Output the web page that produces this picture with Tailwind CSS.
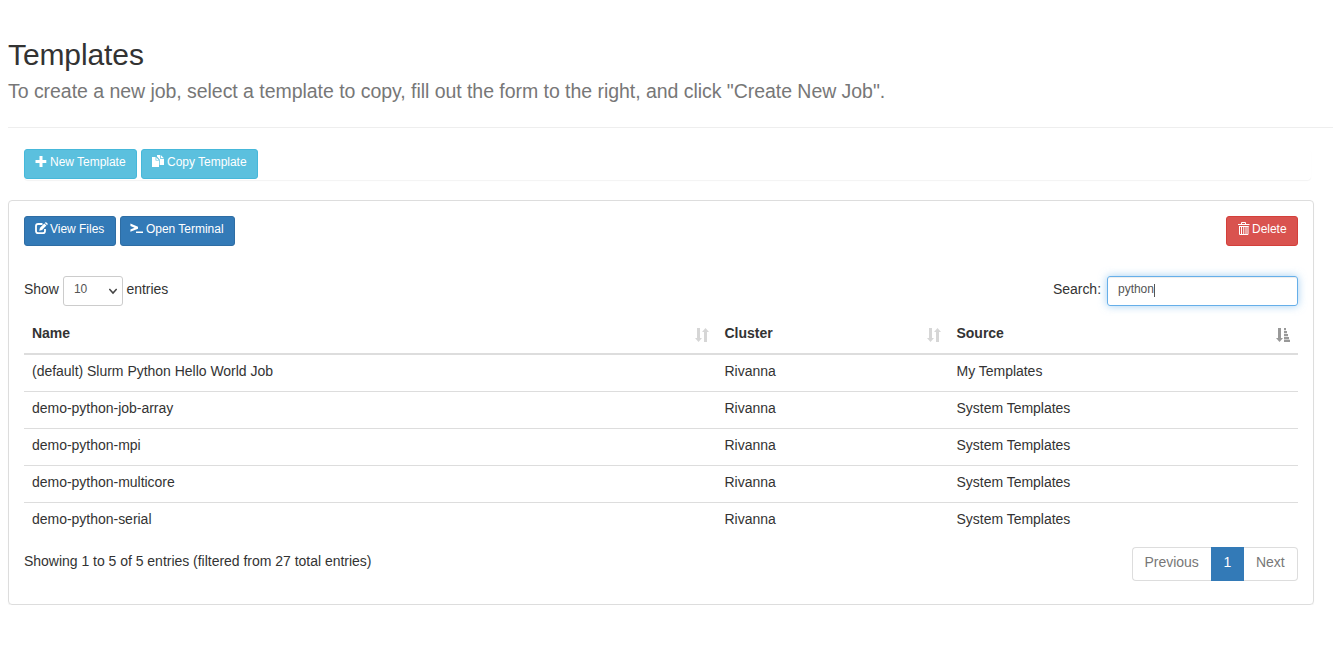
<!DOCTYPE html>
<html lang="en">
<head>
<meta charset="utf-8">
<title>Templates</title>
<script src="https://cdn.jsdelivr.net/npm/@tailwindcss/browser@4"></script>
</head>
<body class="bg-white font-['Nimbus_Sans','Liberation_Sans',Arial,sans-serif] text-sm leading-5 tracking-[-0.02px] text-[#333] overflow-hidden">
<div class="pl-2 pt-[38px]">
  <header class="h-[90px] border-b border-[#eee]">
    <h1 class="text-[30px] leading-[33px] tracking-[-0.1px]">Templates</h1>
    <p class="mt-[8px] text-[19.5px] leading-6 tracking-[-0.042px] text-[#777]">To create a new job, select a template to copy, fill out the form to the right, and click "Create New Job".</p>
  </header>

  <div class="ml-4 mt-[21px] mr-[22px] flex h-[31px] items-start gap-1 rounded-[4px] text-xs text-white shadow-[0_1px_1px_rgba(0,0,0,0.05)]">
    <button class="flex h-[30px] w-[113px] items-start rounded-[3px] border border-[#46b8da] bg-[#5bc0de] pl-2.5 pt-[5px] leading-[15px] whitespace-nowrap">
      <svg class="mr-[3px] mt-px h-3 w-3 shrink-0" viewBox="0 0 12 12" fill="currentColor"><path d="M4.500 0h3v4H11.300v3H7.500v4h-3V7H.5V4h4z"/></svg><span>New Template</span>
    </button>
    <button class="flex h-[30px] w-[117px] items-start rounded-[3px] border border-[#46b8da] bg-[#5bc0de] pl-2.5 pt-[5px] leading-[15px] whitespace-nowrap">
      <svg class="mr-[3px] h-[13px] w-3 shrink-0" viewBox="0 0 12 13" fill="currentColor"><path d="M0 2h3.600v3.600h3.400V12H0zM4.300 2.300 6.700 4.900H4.300zM5 0h3.300v4H12v6H7.700V4.500L5 1.500zM9 .3 12 3.300H9z"/></svg><span>Copy Template</span>
    </button>
  </div>

  <main class="mt-[20px] mr-[19px] h-[405px] rounded-[4px] border border-[#ddd] px-[15px] pt-[15px] shadow-[0_1px_1px_rgba(0,0,0,0.05)]">
    <div class="flex items-start gap-1 text-xs text-white">
      <button class="flex h-[30px] w-[92px] items-start rounded-[3px] border border-[#2e6da4] bg-[#337ab7] pl-2.5 pt-[5px] leading-[15px] whitespace-nowrap">
        <svg class="mr-[2px] h-[13px] w-[13px] shrink-0" viewBox="0 0 13 13" fill="none" stroke="currentColor"><path stroke-width="1.800" d="M7.500 2H3.200C1.800 2 1 2.800 1 4v5c0 1.400.8 2.200 2.200 2.200H8c1.400 0 2-.8 2-2.200V7"/><path fill="currentColor" stroke="none" d="m4.200 8.800.8-3L9.300 1.500l2.100 2.100L7.100 7.900zM9.900 1l1-.9 2.100 2-1 .9z"/></svg><span>View Files</span>
      </button>
      <button class="flex h-[30px] w-[115px] items-start rounded-[3px] border border-[#2e6da4] bg-[#337ab7] pl-[9px] pt-[5px] leading-[15px] whitespace-nowrap">
        <svg class="mr-[3px] h-[13px] w-[13px] shrink-0" viewBox="0 0 13 13" fill="currentColor"><path d="M.4 1.600 8 4.800v1.900L.4 9.800V7.500L4.600 5.700.4 3.900zM6 9.500h7v1.500H6z"/></svg><span>Open Terminal</span>
      </button>
      <button class="ml-auto flex h-[30px] w-[72px] items-start rounded-[3px] border border-[#d43f3a] bg-[#d9534f] pl-[11px] pt-[5px] leading-[15px] whitespace-nowrap">
        <svg class="mr-[2px] h-[13px] w-3 shrink-0" viewBox="0 0 12 13" fill="none" stroke="currentColor"><path d="M3.500 2V.5h4V2M0 2.500h11.500M1.500 4v8.500h8.500V4M3.500 4v8M5.750 4v8M8 4v8M1 4.500h9.500"/></svg><span>Delete</span>
      </button>
    </div>

    <div class="mt-[30px] flex h-[30px] items-start">
      <span class="pt-[3px]">Show</span>
      <div class="ml-1 flex h-[30px] w-[60px] justify-between rounded-[3px] border border-[#ccc] pl-2.5 pr-[5px] pt-1 text-xs leading-[17px] text-[#555]">10
        <svg class="mt-[7px] h-[7px] w-2" viewBox="0 0 8 7" fill="none" stroke="#444" stroke-width="1.600"><path d="m.3 1 3.700 4 3.700-4"/></svg>
      </div>
      <span class="ml-[3.500px] pt-[3px]">entries</span>
      <span class="ml-auto mr-1.5 pt-[3px]">Search:</span>
      <div class="flex h-[30px] w-[191px] rounded-[3px] border border-[#66afe9] pl-2.5 pt-1 text-xs leading-[17px] text-[#555] shadow-[inset_0_1px_1px_rgba(0,0,0,0.075),0_0_8px_rgba(102,175,233,0.6)]">python<span class="mt-[3px] h-[13px] w-px bg-[#555]"></span></div>
    </div>

    <table class="mt-[6px] w-[1274px] table-fixed border-collapse text-left">
      <colgroup><col class="w-[692.500px]"><col class="w-[232px]"><col class="w-[349.500px]"></colgroup>
      <thead>
        <tr class="h-[42px] border-b-2 border-[#ddd] align-top font-bold">
          <th class="pl-2 pr-2 pt-[11px]"><div class="flex justify-between">Name<svg class="mt-[5px] h-[14px] w-[14px] text-[#d6d6d6]" viewBox="0 0 14 14" fill="currentColor"><path d="M2 0h3v10h2l-3.500 4L0 10h2zM9 14h3V4h2l-3.500-4L7 4h2z"/></svg></div></th>
          <th class="pl-2 pr-2 pt-[11px]"><div class="flex justify-between">Cluster<svg class="mt-[5px] h-[14px] w-[14px] text-[#d6d6d6]" viewBox="0 0 14 14" fill="currentColor"><path d="M2 0h3v10h2l-3.500 4L0 10h2zM9 14h3V4h2l-3.500-4L7 4h2z"/></svg></div></th>
          <th class="pl-2 pr-2 pt-[11px]"><div class="flex justify-between">Source<svg class="mt-[5px] h-[14px] w-[14px] text-[#999]" viewBox="0 0 14 14" fill="currentColor"><path d="M2 0h3v10h2l-3.500 4L0 10h2zM8 0h2v2.200H8zM8 3h3v2.200H8zM8 6h4v2.200H8zM8 9h5v2.200H8zM8 11.800h6V14H8z"/></svg></div></th>
        </tr>
      </thead>
      <tbody class="align-top">
        <tr class="h-[37px] border-b border-[#ddd]"><td class="px-2 pt-[6px]">(default) Slurm Python Hello World Job</td><td class="px-2 pt-[6px]">Rivanna</td><td class="px-2 pt-[6px]">My Templates</td></tr>
        <tr class="h-[37px] border-b border-[#ddd]"><td class="px-2 pt-[6px]">demo-python-job-array</td><td class="px-2 pt-[6px]">Rivanna</td><td class="px-2 pt-[6px]">System Templates</td></tr>
        <tr class="h-[37px] border-b border-[#ddd]"><td class="px-2 pt-[6px]">demo-python-mpi</td><td class="px-2 pt-[6px]">Rivanna</td><td class="px-2 pt-[6px]">System Templates</td></tr>
        <tr class="h-[37px] border-b border-[#ddd]"><td class="px-2 pt-[6px]">demo-python-multicore</td><td class="px-2 pt-[6px]">Rivanna</td><td class="px-2 pt-[6px]">System Templates</td></tr>
        <tr class="h-[37px]"><td class="px-2 pt-[6px]">demo-python-serial</td><td class="px-2 pt-[6px]">Rivanna</td><td class="px-2 pt-[6px]">System Templates</td></tr>
      </tbody>
    </table>

    <div class="mt-[8px] flex items-start justify-between">
      <p class="pt-[4px]">Showing 1 to 5 of 5 entries (filtered from 27 total entries)</p>
      <nav class="flex h-[34px] text-[#777]">
        <span class="w-[79px] rounded-l-[4px] border border-r-0 border-[#ddd] pl-[11.500px] pt-[4px]">Previous</span>
        <span class="w-[33px] bg-[#337ab7] pt-[5px] text-center text-white">1</span>
        <span class="w-[54px] rounded-r-[4px] border border-l-0 border-[#ddd] pl-3 pt-[4px]">Next</span>
      </nav>
    </div>
  </main>
</div>
</body>
</html>
